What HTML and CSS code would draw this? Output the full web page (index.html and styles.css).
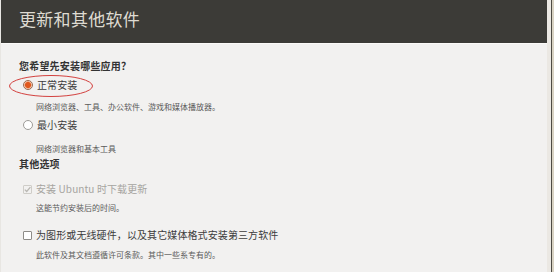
FILE: index.html
```html
<!DOCTYPE html>
<html lang="zh-CN">
<head>
<meta charset="utf-8">
<link rel="stylesheet" href="styles.css">
</head>
<body>
<div class="screen">
  <div class="window">
    <header class="header"><h1 class="title">更新和其他软件</h1></header>
    <main class="content">
      <div class="heading q1">您希望先安装哪些应用？</div>
      <div class="option opt1"><span class="radio radio-on"></span><span class="label">正常安装</span></div>
      <div class="desc d1">网络浏览器、工具、办公软件、游戏和媒体播放器。</div>
      <div class="option opt2"><span class="radio"></span><span class="label">最小安装</span></div>
      <div class="desc d2">网络浏览器和基本工具</div>
      <div class="heading h2">其他选项</div>
      <div class="option opt3 disabled"><span class="check check-on">
        <svg viewBox="0 0 9 9" width="9" height="9"><path d="M1.8 4.6 L3.7 6.5 L7.4 2.2" fill="none" stroke="#b9b7b2" stroke-width="1.3"/></svg>
      </span><span class="label">安装 Ubuntu 时下载更新</span></div>
      <div class="desc d3">这能节约安装后的时间。</div>
      <div class="option opt4"><span class="check"></span><span class="label">为图形或无线硬件，以及其它媒体格式安装第三方软件</span></div>
      <div class="desc d4">此软件及其文档遵循许可条款。其中一些系专有的。</div>
      <svg class="mark" viewBox="0 0 86 24" width="86" height="24"><ellipse cx="43" cy="12" rx="41.5" ry="10.5" fill="none" stroke="#d3413f" stroke-width="1"/></svg>
    </main>
  </div>
  <div class="edge"><span class="edge-light"></span><span class="edge-dark"></span><span class="edge-out"></span></div>
</div>
</body>
</html>
```
FILE: styles.css
```css
html, body {
  margin: 0;
  padding: 0;
  width: 554px;
  height: 272px;
  overflow: hidden;
  font-family: "Noto Sans CJK SC", "Noto Sans", sans-serif;
}
.screen {
  display: flex;
  height: 272px;
}
.window {
  width: 547px;
  background: #f2f1f0;
  position: relative;
  border-left: 1px solid #e8e6e2;
  box-sizing: border-box;
}
.header {
  height: 43px;
  background: #3c3b37;
  border-bottom: 1px solid #fbfaf8;
  display: flex;
  align-items: center;
  padding-left: 18px;
}
.title {
  margin: 0;
  font-weight: normal;
  font-size: 17px;
  color: #dfdbd2;
  letter-spacing: 0.3px;
  line-height: 20px;
  padding-bottom: 6px;
}
.content {
  position: relative;
  padding: 15px 0 0 18px;
  color: #3c3c3c;
}
.heading {
  font-size: 10px;
  font-weight: bold;
  line-height: 14px;
  height: 14px;
  color: #333;
  letter-spacing: 0.2px;
}
.option {
  display: flex;
  align-items: center;
  height: 16px;
  padding-left: 4px;
}
.label {
  font-size: 10px;
  line-height: 16px;
  margin-left: 4px;
  color: #3c3c3c;
  letter-spacing: 0.1px;
}
.desc {
  font-size: 8px;
  line-height: 12px;
  height: 12px;
  padding-left: 17px;
  color: #5a5a5a;
}
.radio {
  width: 8px;
  height: 8px;
  border-radius: 50%;
  border: 1px solid #9d9b97;
  background: #fff;
  box-sizing: content-box;
}
.radio-on {
  background: radial-gradient(circle, #e0591f 0 2.6px, #f29a6b 3.2px, #fbe7dc 4px);
  border-color: #9a6a50;
}
.check {
  width: 7px;
  height: 7px;
  border: 1px solid #8e8c88;
  background: #fff;
  border-radius: 1px;
  display: flex;
  align-items: center;
  justify-content: center;
  margin-left: 0;
}
.check svg { display: block; flex: none; }
.check-on {
  border-color: #cfcdc8;
  background: #f2f1f0;
}
.disabled .label { color: #a6a4a0; }

.opt1 { margin-top: 4px; }
.d1 { margin-top: 8px; }
.opt2 { margin-top: 4px; }
.d2 { margin-top: 10px; }
.h2 { margin-top: 2px; }
.opt3 { margin-top: 10px; }
.d3 { margin-top: 5px; }
.opt4 { margin-top: 13px; }
.d4 { margin-top: 6px; }

.mark {
  position: absolute;
  left: 7px;
  top: 30px;
}
.edge {
  flex: 1;
  display: flex;
}
.edge-light { width: 4px; background: #ebe8e3; }
.edge-dark { width: 1px; background: #4e4b45; }
.edge-out { flex: 1; background: #d9d3c4; }
```
